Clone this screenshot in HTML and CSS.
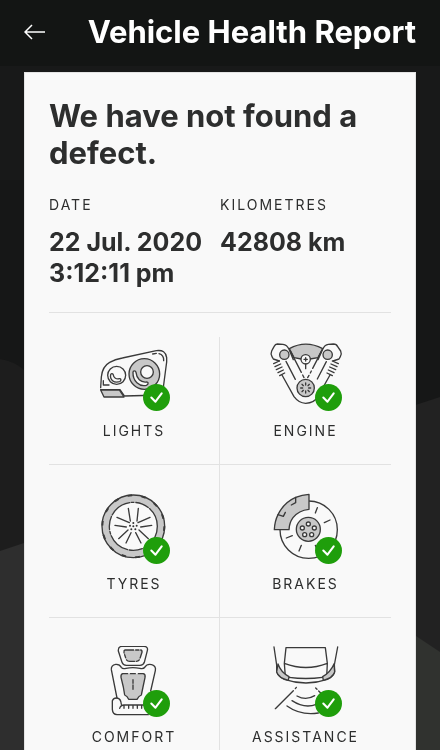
FILE: index.html
```html
<!DOCTYPE html>
<html lang="en">
<head>
    <meta charset="UTF-8">
    <meta name="viewport" content="width=device-width, initial-scale=1.0">
    <title>Vehicle Health Report</title>
    <link rel="stylesheet" href="styles.css">
</head>
<body>
    <!-- Backdrop -->
    <svg class="backdrop" viewBox="0 0 440 750" preserveAspectRatio="none" aria-hidden="true">
        <rect width="440" height="750" fill="#131514"/>
        <path d="M0 66H440V180H0z" fill="#181919"/>
        <path d="M0 180H440V750H0z" fill="#161717"/>
        <path d="M0 359Q14 361 24 370L60 400V560H0z" fill="#1d1d1d"/>
        <path d="M440 397L400 410V660H440z" fill="#222222"/>
        <path d="M0 551L24 543L60 530V750H0z" fill="#2e2e2e"/>
        <path d="M440 652L416 636L400 626V750H440z" fill="#30322f"/>
    </svg>

    <div class="app">
        <header class="header">
            <button class="back-btn" type="button" aria-label="Back">
                <svg width="22" height="16" viewBox="0 0 22 16" fill="none" stroke="#fff" stroke-width="1.5">
                    <path d="M1 8H21M8 1L1 8L8 15"/>
                </svg>
            </button>
            <h1>Vehicle Health Report</h1>
        </header>

        <main class="card">
            <h2>We have not found a defect.</h2>

            <dl class="facts">
                <div>
                    <dt>DATE</dt>
                    <dd>22 Jul. 2020 3:12:11 pm</dd>
                </div>
                <div>
                    <dt>KILOMETRES</dt>
                    <dd>42808 km</dd>
                </div>
            </dl>

            <ul class="checks">
                <li>
                    <div class="icon">
                        <svg class="drawing" viewBox="0 15 270 216">
                            <path d="M35 158L37 126Q40 94 62 82Q78 73 100 69L202 47Q230 43 233 68Q234 78 231 96L220 180L106 183L93 164H35"/>
                            <path class="grey" d="M35 165H91L105 186H45z"/>
                            <circle cx="83" cy="121" r="27"/>
                            <path d="M65 119C62 134 74 145 92 140C98 137 96 130 91 131C82 133 74 129 73 120C72 115 66 114 65 119z"/>
                            <circle class="grey" cx="166" cy="117" r="46"/>
                            <circle class="paper" cx="174" cy="111" r="19"/>
                            <path class="paper" d="M132 112C131 139 151 156 172 151C180 148 178 140 172 141C155 143 143 131 141 112C140 106 132 106 132 112z"/>
                            <path d="M191 57L202 55M210 56Q225 60 224 77M43 137V150H60"/>
                        </svg>
                        <svg class="badge" viewBox="0 0 26 26"><circle cx="13" cy="13" r="13"/><path d="M8 13L12 17L18 9"/></svg>
                    </div>
                    <span>LIGHTS</span>
                </li>
                <li>
                    <div class="icon">
                        <svg class="drawing" viewBox="3 15 270 216">
                            <path class="grey" d="M88 41Q137 14 188 41L174 68L150 72A14 14 0 0 0 124 72L102 68z"/>
                            <path d="M100 74L87 43Q81 29 69 28L52 27Q46 27 42 35L35 48Q31 57 36 65L40 72L58 78M66 120L102 185Q116 204 137 205Q163 204 174 184L210 120M219 78L237 72L241 65Q246 57 242 48L233 35Q230 27 220 27L205 28Q194 29 188 43L174 74"/>
                            <path d="M78 79L106 133M199 80L172 132M92 50L124 112M128 120L132 128M184 50L158 100M154 108L151 114M147 121L143 128"/>
                            <path d="M41 86L58 78M45 95L62 87M49 104L66 96M54 113L70 105M59 122L74 114M235 86L217 78M231 95L213 87M227 104L209 96M222 113L205 105M217 122L201 114"/>
                            <circle class="grey" cx="73" cy="59" r="14"/>
                            <circle class="grey" cx="203" cy="59" r="14"/>
                            <circle class="paper" cx="137" cy="73" r="14"/>
                            <path d="M137 68V78M132 73H142M137 87V101"/>
                            <circle class="grey" cx="137" cy="159" r="26"/>
                            <path d="M137 144V150M137 168V174M122 159H128M146 159H152M126 148L130 152M144 166L148 170M148 148L144 152M130 166L126 170"/>
                        </svg>
                        <svg class="badge" viewBox="0 0 26 26"><circle cx="13" cy="13" r="13"/><path d="M8 13L12 17L18 9"/></svg>
                    </div>
                    <span>ENGINE</span>
                </li>
                <li>
                    <div class="icon">
                        <svg class="drawing" viewBox="0 24 270 216">
                            <circle class="grey" cx="133" cy="124" r="94"/>
                            <circle class="tread" cx="133" cy="124" r="93"/>
                            <circle class="paper" cx="133" cy="124" r="72" stroke-dasharray="66 5 8 6 40 5"/>
                            <path d="M118 70L124 108M144 108L148 70M84 97L121 113M147 113L183 97M78 121L112 126M155 126L188 121M89 161L117 135M126 143L111 174M140 143L156 174M150 135L178 161"/>
                            <g class="dots">
                                <circle cx="133" cy="114" r="3"/><circle cx="123" cy="122" r="3"/><circle cx="143" cy="122" r="3"/>
                                <circle cx="127" cy="133" r="3"/><circle cx="139" cy="133" r="3"/><circle cx="133" cy="124" r="3"/>
                            </g>
                        </svg>
                        <svg class="badge" viewBox="0 0 26 26"><circle cx="13" cy="13" r="13"/><path d="M8 13L12 17L18 9"/></svg>
                    </div>
                    <span>TYRES</span>
                </li>
                <li>
                    <div class="icon">
                        <svg class="drawing" viewBox="3 24 270 216">
                            <circle class="paper" cx="146" cy="134" r="86"/>
                            <path class="grey" d="M147 28V73Q116 76 99 98Q88 113 87 134H43Q44 109 54 89Q72 52 107 37Q126 29 147 28z"/>
                            <path d="M54 89L70 94L76 82M94 60L107 53V37"/>
                            <circle class="grey" cx="145" cy="133" r="36"/>
                            <circle class="paper" cx="145" cy="117" r="6"/>
                            <circle class="paper" cx="127" cy="129" r="6"/>
                            <circle class="paper" cx="163" cy="129" r="6"/>
                            <circle class="paper" cx="134" cy="149" r="6"/>
                            <circle class="paper" cx="155" cy="149" r="6"/>
                            <path d="M172 68L166 84M210 105L193 113M97 152L79 159M124 181L117 198M166 181L171 193"/>
                        </svg>
                        <svg class="badge" viewBox="0 0 26 26"><circle cx="13" cy="13" r="13"/><path d="M8 13L12 17L18 9"/></svg>
                    </div>
                    <span>BRAKES</span>
                </li>
                <li>
                    <div class="icon">
                        <svg class="drawing" viewBox="0 30 270 216">
                            <path d="M98 31H165Q178 32 175 44L166 79Q163 88 153 88H112Q102 88 99 79L88 45Q87 32 98 31z"/>
                            <path class="grey" stroke-dasharray="26 6 10 5" d="M108 42H155Q160 43 159 49L152 70Q149 76 142 76H122Q114 76 111 69L105 50Q104 43 108 42z"/>
                            <path d="M84 186L67 101Q66 87 80 85Q92 84 97 94Q101 100 111 97Q131 93 153 97Q163 100 168 93Q174 83 188 86Q202 90 199 104L185 165"/>
                            <path class="grey" d="M101 113H116M124 113H139M148 113H163Q170 115 168 125L162 153L157 177Q149 180 144 190H119Q115 180 107 177L103 153L96 124Q95 115 101 113"/>
                            <path d="M132 131V142M132 147V160"/>
                            <path d="M84 186Q74 185 70 194V220Q71 235 84 236H178M84 186Q96 188 97 205M170 207H105Q95 207 92 217M105 208V217M119 208V217M132 208V217M145 208V217M158 208V217"/>
                        </svg>
                        <svg class="badge" viewBox="0 0 26 26"><circle cx="13" cy="13" r="13"/><path d="M8 13L12 17L18 9"/></svg>
                    </div>
                    <span>COMFORT</span>
                </li>
                <li>
                    <div class="icon">
                        <svg class="drawing" viewBox="33 30 270 216">
                            <path d="M72 33L80 87M263 33L253 87M108 35H226L232 82L230 124M108 35L103 82L106 122M103 82Q168 107 232 82"/>
                            <path d="M80 87V105Q83 122 103 130Q168 152 232 130Q252 121 254 106L253 84M117 124Q168 131 217 124"/>
                            <path class="grey" d="M84 84Q92 108 117 122L115 133Q86 126 80 108z"/>
                            <path class="grey" d="M252 84Q242 108 218 122L220 133Q248 126 254 108z"/>
                            <path d="M130 164L76 218M139 154L136 158M197 156L201 160M206 165L212 171M141 180Q168 195 194 179M126 194Q164 219 199 205M111 210Q151 239 205 231"/>
                        </svg>
                        <svg class="badge" viewBox="0 0 26 26"><circle cx="13" cy="13" r="13"/><path d="M8 13L12 17L18 9"/></svg>
                    </div>
                    <span>ASSISTANCE</span>
                </li>
            </ul>
        </main>
    </div>
</body>
</html>
```
FILE: styles.css
```css
* {
    margin: 0;
    padding: 0;
    box-sizing: border-box;
}

body {
    font-family: Inter, "Open Sans", sans-serif;
    background-color: #131514;
    color: #2d2e2e;
}

.backdrop {
    position: fixed;
    inset: 0;
    width: 100%;
    height: 100%;
}

/* The report scrolls inside the screen */
.app {
    position: relative;
    height: 100vh;
    padding: 0 24px;
    overflow-y: auto;
    scrollbar-width: none;
}

.header {
    display: flex;
    justify-content: space-between;
    align-items: center;
    padding: 14px 0 22px;
}

.back-btn {
    display: flex;
    border: none;
    background: none;
    cursor: pointer;
}

h1 {
    font-size: 31px;
    line-height: 36px;
    font-weight: 700;
    color: #fff;
    white-space: nowrap;
}

.card {
    background-color: #f9f9f9;
    border: 1px solid #e4e4e4;
    padding: 24px;
}

h2 {
    font-size: 31px;
    line-height: 37px;
    font-weight: 700;
}

.facts {
    display: grid;
    grid-template-columns: 1fr 1fr;
    padding: 25px 0 23px;
    border-bottom: 1px solid #e2e2e2;
}

dt,
.checks span {
    font-size: 14px;
    line-height: 18px;
    font-weight: 400;
    letter-spacing: 2px;
}

dd {
    margin-top: 13px;
    font-size: 25px;
    line-height: 31px;
    font-weight: 700;
}

.checks {
    display: grid;
    grid-template-columns: 1fr 1fr;
    margin-top: 24px;
    list-style: none;
}

.checks li {
    display: flex;
    flex-direction: column;
    align-items: center;
    gap: 10px;
    padding: 28px 0 24px;
    border-bottom: 1px solid #e2e2e2;
}

.checks li:nth-child(-n+2) {
    padding-top: 3px;
}

.checks li:nth-child(odd) {
    border-right: 1px solid #e2e2e2;
}

.checks li:nth-last-child(-n+2) {
    border-bottom: none;
}

.icon {
    position: relative;
    width: 90px;
    height: 72px;
}

.drawing {
    width: 90px;
    height: 72px;
    fill: none;
    stroke: #3a3a3a;
    stroke-width: 4;
    stroke-linecap: round;
    stroke-linejoin: round;
}

.drawing .grey {
    fill: #c8c8c8;
}

.drawing .paper {
    fill: #f9f9f9;
}

.drawing .tread {
    stroke-width: 6;
    stroke-dasharray: 14 28;
    stroke-linecap: butt;
}

.drawing .dots {
    fill: #333;
    stroke: none;
}

/* Green tick over the drawing */
.badge {
    position: absolute;
    right: 9px;
    bottom: 1px;
    width: 27px;
    height: 27px;
    fill: #1f9e0b;
}

.badge path {
    fill: none;
    stroke: #fff;
    stroke-width: 2;
    stroke-linecap: round;
    stroke-linejoin: round;
}
```
